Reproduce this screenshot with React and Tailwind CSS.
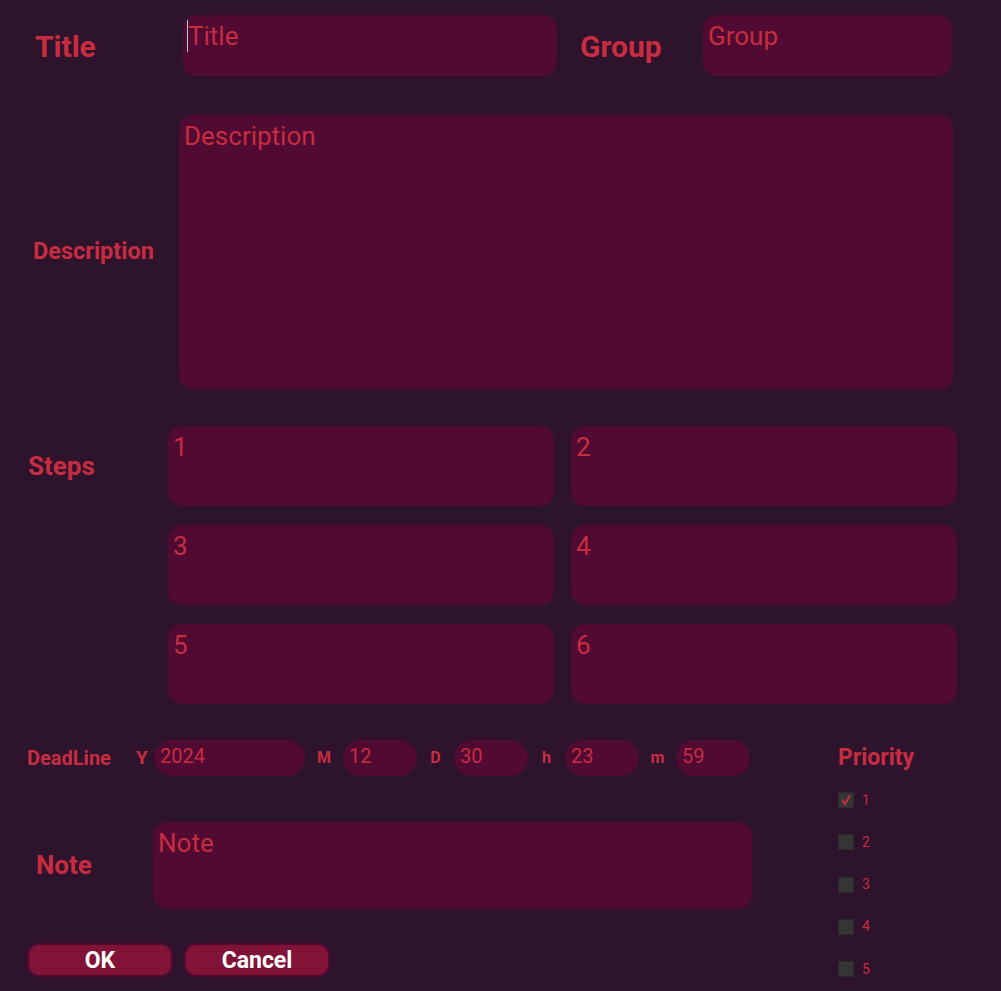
import React from 'react';

const field = 'bg-[#510a32] text-[#c72c41] rounded-[14px]';

function Box({ text, className }) {
  return (
    <div className={`${field} ${className}`}>
      <span>{text}</span>
    </div>
  );
}

function TimeBox({ label, value, lw, w, big }) {
  return (
    <div className="flex items-center">
      <span className={`${big ? 'text-[19px]' : 'text-[16px]'} font-bold ${lw} text-center`}>{label}</span>
      <div className={`${field} rounded-[18px] h-[36px] ${w} pl-[6px] pt-[3px] text-[20px] leading-[26px]`}>{value}</div>
    </div>
  );
}

export default function App() {
  return (
    <div
      className="w-[1001px] h-[991px] bg-[#2d132c] text-[#c72c41] overflow-hidden relative"
      style={{ fontFamily: 'Roboto, "Noto Sans", sans-serif' }}
    >
      {/* title / group */}
      <div className="flex items-center pt-[15px]">
        <div className="w-[183px] pl-[35px] pt-[2px] text-[30px] font-bold">Title</div>
        <div className={`${field} w-[374px] h-[61px] pl-[5px] pt-[5px] text-[26px] leading-[32px] relative`}>
          <span className="absolute left-[4px] top-[5px] w-[1px] h-[32px] bg-[#9fd6c0]" />
          Title
        </div>
        <div className="w-[146px] pl-[23px] pt-[2px] text-[30px] font-bold">Group</div>
        <Box text="Group" className="w-[249px] h-[61px] pl-[5px] pt-[5px] text-[26px] leading-[32px]" />
      </div>

      {/* description */}
      <div className="flex items-center mt-[39px]">
        <div className="w-[179px] pl-[33px] text-[23.5px] font-bold">Description</div>
        <Box text="Description" className="w-[774px] h-[274px] pl-[5px] pt-[5px] text-[26px] leading-[32px]" />
      </div>

      {/* steps */}
      <div className="flex mt-[37px]">
        <div className="w-[168px] pl-[28px] h-[80px] flex items-center text-[26px] font-bold">Steps</div>
        <div className="grid grid-cols-[386px_386px] gap-x-[17px] gap-y-[19px]">
          {['1', '2', '3', '4', '5', '6'].map((s) => (
            <Box key={s} text={s} className="h-[80px] pl-[5px] pt-[5px] text-[26px] leading-[32px]" />
          ))}
        </div>
      </div>

      {/* bottom */}
      <div className="flex mt-[36px]">
        <div className="w-[838px]">
          <div className="flex items-center h-[36px]">
            <div className="w-[130px] pl-[27px] text-[20px] font-bold">DeadLine</div>
            <TimeBox label="Y" value="2024" lw="w-[24px]" w="w-[151px]" big />
            <TimeBox label="M" value="12" lw="w-[38px]" w="w-[74px]" />
            <TimeBox label="D" value="30" lw="w-[37px]" w="w-[74px]" />
            <TimeBox label="h" value="23" lw="w-[37px]" w="w-[74px]" />
            <TimeBox label="m" value="59" lw="w-[37px]" w="w-[74px]" />
          </div>
          <div className="flex items-center mt-[46px]">
            <div className="w-[153px] pl-[36px] text-[26px] font-bold">Note</div>
            <Box text="Note" className="w-[599px] h-[87px] pl-[5px] pt-[5px] text-[26px] leading-[32px]" />
          </div>
          <div className="flex gap-[11px] pl-[27px] mt-[34px]">
            <button className="w-[146px] h-[34px] rounded-[12px] bg-[#801336] border-2 border-[#510a32] text-white text-[23px] font-bold leading-none">
              OK
            </button>
            <button className="w-[146px] h-[34px] rounded-[12px] bg-[#801336] border-2 border-[#510a32] text-white text-[23px] font-bold leading-none">
              Cancel
            </button>
          </div>
        </div>
        <div className="flex-1">
          <div className="h-[36px] flex items-center text-[23px] font-bold">Priority</div>
          <div className="flex flex-col gap-[26.25px] mt-[16px]">
            {[1, 2, 3, 4, 5].map((n) => (
              <div key={n} className="flex items-center h-[16px]">
                <div className="w-[16px] h-[16px] bg-[#363636] border border-[#2a2a2a] flex items-center justify-center">
                  {n === 1 && (
                    <svg width="12" height="12" viewBox="0 0 12 12">
                      <path d="M2 6 L5 10 L10 1.5" fill="none" stroke="#c72c41" strokeWidth="2" />
                    </svg>
                  )}
                </div>
                <span className="ml-[8px] text-[14px]">{n}</span>
              </div>
            ))}
          </div>
        </div>
      </div>
    </div>
  );
}
